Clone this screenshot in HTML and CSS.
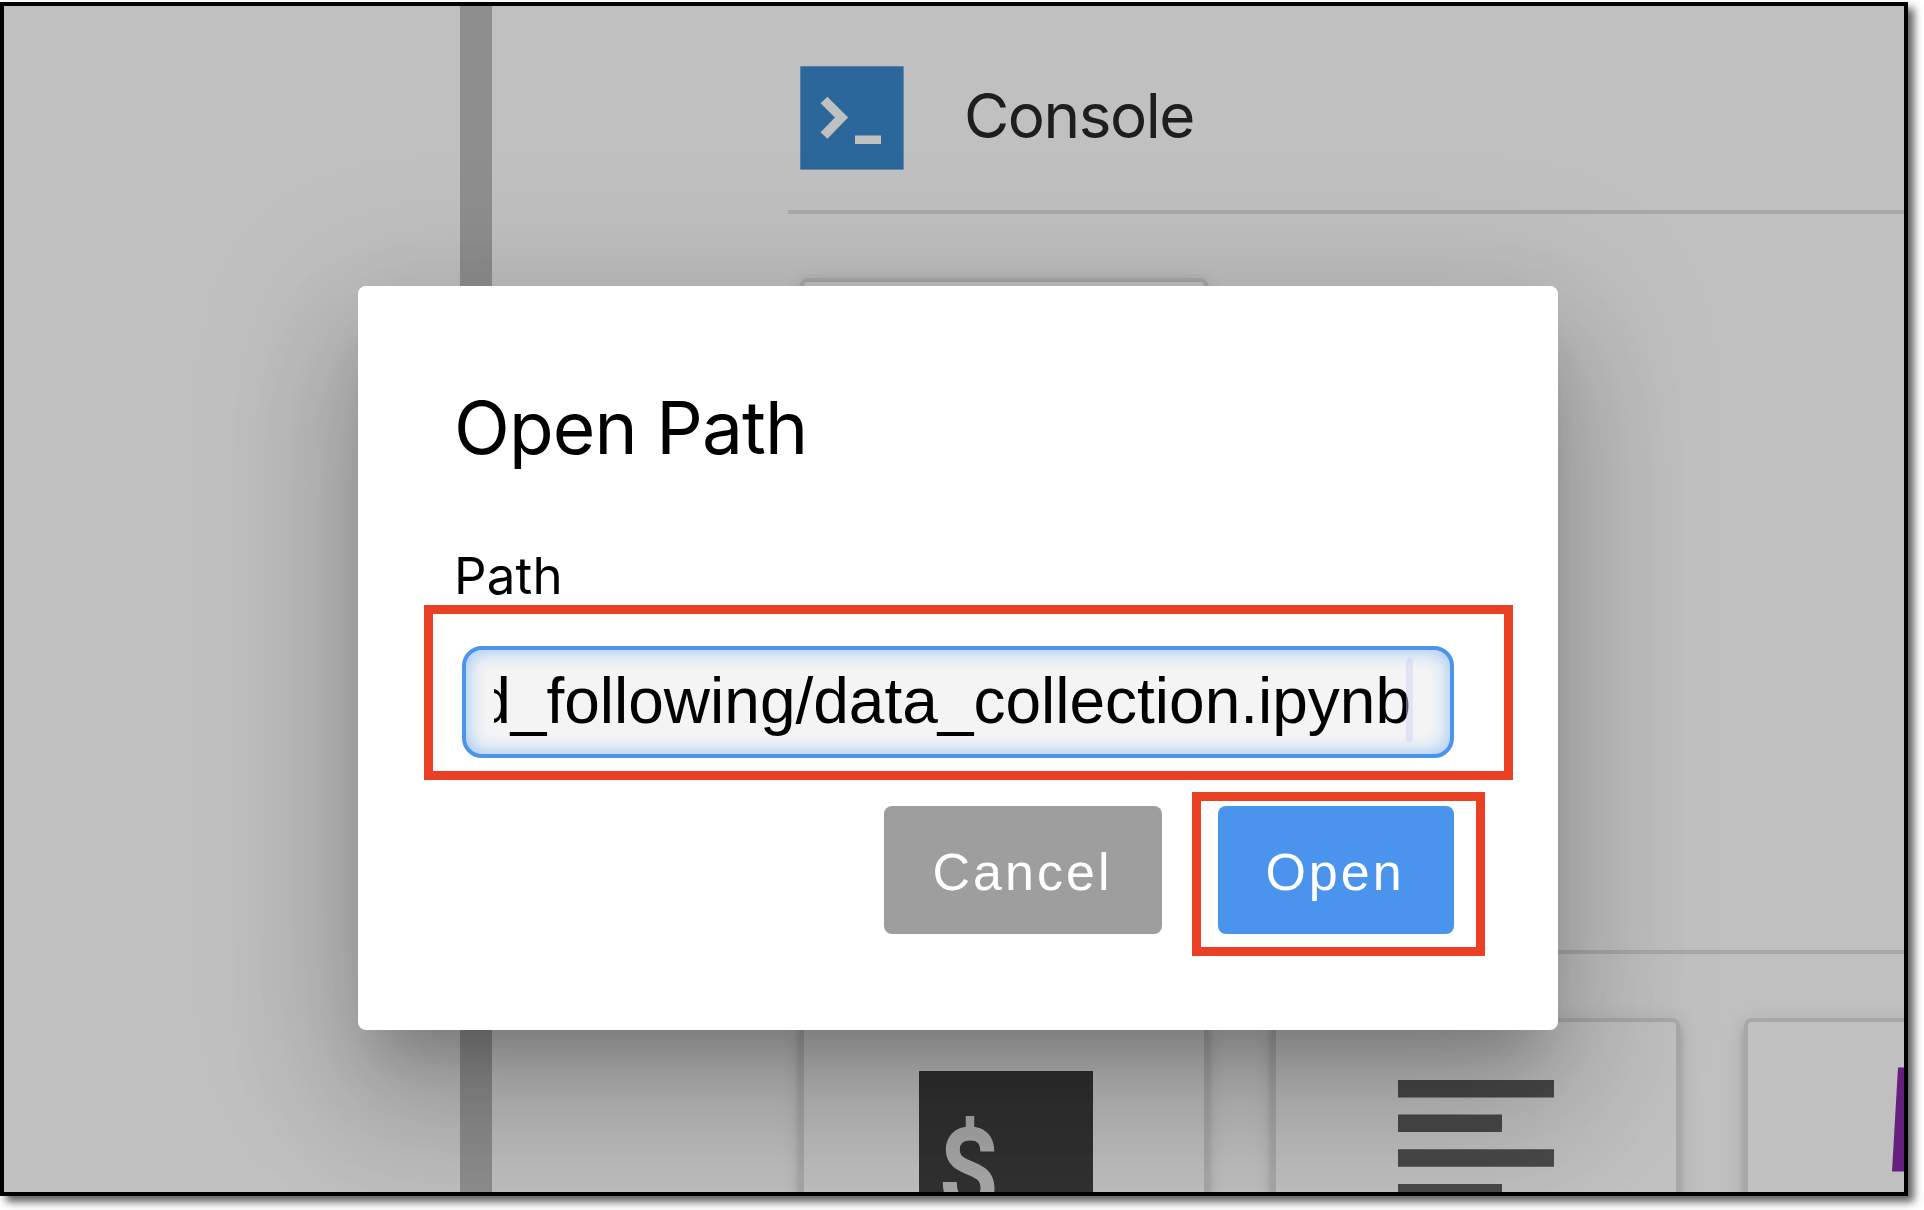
FILE: index.html
```html
<!DOCTYPE html>
<html lang="en">
<head>
<meta charset="utf-8">
<title>Open Path</title>
<link rel="stylesheet" href="styles.css">
</head>
<body>
<div class="frame">
  <div class="sidebar"></div>
  <div class="splitter"></div>
  <main class="launcher">
    <header class="section-head">
      <svg class="section-icon" viewBox="0 0 104 104">
        <rect x=".3" y=".3" width="103.3" height="103.3" fill="#3a89ce"/>
        <path d="M24 34 41.500 51.500 24 69.500" fill="none" stroke="#fff" stroke-width="9.500"/>
        <rect x="55" y="69.500" width="26" height="8.500" fill="#fff"/>
      </svg>
      <h2 class="section-title">Console</h2>
    </header>
    <div class="cards"><div class="card"></div></div>
    <div class="rule"></div>
    <div class="cards other">
      <div class="card">
        <svg class="card-icon" width="174" height="174" viewBox="0 0 174 174">
          <rect width="174" height="174" fill="#424242"/>
          <g fill="none" stroke="#e0e0e0">
            <path d="M51 45v15" stroke-width="8.500"/>
            <path d="M68.300 80.500C68.300 69 62.500 62.500 51 62.500C40 62.500 33.800 69 33.800 78.500C33.800 102 68.500 92 68.500 117C68.500 127 62 133.500 50.500 133.500C38 133.500 30.800 127 30.800 111" stroke-width="14"/>
          </g>
        </svg>
      </div>
      <div class="card">
        <svg class="card-icon lines" width="156" height="156" viewBox="0 0 156 156">
          <path d="M0 0h156v17.500H0zM0 34.600h104v17.500H0zM0 69.300h156v17.500H0zM0 104h104v17.500H0zM0 138.500h156v17.500H0z" fill="#616161"/>
        </svg>
      </div>
      <div class="card">
        <svg class="card-icon markdown" width="112" height="120" viewBox="0 0 112 120">
          <path d="M6 .5H106L112 104.500H0z" fill="#862aa6"/>
        </svg>
      </div>
    </div>
  </main>
  <div class="backdrop">
    <section class="dialog">
      <h1 class="title">Open Path</h1>
      <div class="label">Path</div>
      <div class="field marked">
        <div class="input"><div class="value"><span>d_following/data_collection.ipynb</span></div><i class="caret"></i></div>
      </div>
      <div class="actions">
        <button class="btn cancel">Cancel</button>
        <div class="marked"><button class="btn open">Open</button></div>
      </div>
    </section>
  </div>
</div>
</body>
</html>
```
FILE: styles.css
```css
* { box-sizing: border-box; }
html, body { width: 1924px; height: 1210px; overflow: hidden; }
body { margin: 0; padding-top: 2px; background: #fff; font-family: Inter, sans-serif; }
h1, h2 { margin: 0; font-weight: 400; }

.frame {
  position: relative;
  display: flex;
  width: 1908px;
  height: 1194px;
  overflow: visible;
  border: 4px solid #000;
  box-shadow: 6px 6px 8px rgba(0, 0, 0, .62);
}
.sidebar { width: 456px; }
.splitter { width: 32px; background: #bdbdbd; }
.launcher { flex: 1; min-width: 0; overflow: hidden; padding-left: 296px; }

.section-head {
  display: flex;
  gap: 60px;
  height: 208px;
  padding: 60px 0 0 12px;
  border-bottom: 4px solid #e0e0e0;
}
.section-icon { width: 104px; height: 104px; flex: none; }
.section-title { color: #282828; font-size: 62px; line-height: 100px; letter-spacing: -1.450px; }

.cards { display: flex; gap: 64px; height: 736px; padding: 64px 0 0 12px; }
.card {
  flex: none;
  width: 408px;
  height: 480px;
  border: 4px solid #e0e0e0;
  border-radius: 8px;
  background: #fff;
  box-shadow: 0 12px 4px -8px rgba(0, 0, 0, .2), 0 8px 8px rgba(0, 0, 0, .14), 0 4px 20px rgba(0, 0, 0, .12);
}
.rule { height: 4px; background: #e0e0e0; }
.card-icon { display: block; margin: 49px 0 0 115px; }
.card-icon.lines { margin: 58px 0 0 122px; }
.card-icon.markdown { margin: 45px 0 0 144px; }

.backdrop {
  position: absolute;
  inset: 0;
  overflow: hidden;
  padding: 280px 0 0 354px;
  background: rgba(0, 0, 0, .247);
}
.dialog {
  width: 1200px;
  height: 744px;
  padding: 96px 44px 0 66px;
  border-radius: 8px;
  background: #fff;
  color: #000;
  box-shadow: 0 40px 52px -24px rgba(0, 0, 0, .2), 0 80px 124px 12px rgba(0, 0, 0, .14), 0 32px 152px 28px rgba(0, 0, 0, .12);
}
.title { padding-left: 30px; height: 152px; font-size: 73px; line-height: 91px; letter-spacing: -.900px; }
.label { padding: 15px 0 0 30px; height: 71px; font-size: 51px; line-height: 54px; letter-spacing: .2px; }
.marked { border: 9px solid #ea4125; }
.field { height: 175px; width: 1089px; padding: 32px 50px 0 29px; }
.input {
  position: relative;
  height: 112px;
  padding: 0 39px 0 28px;
  border: 4px solid #4a94ee;
  border-radius: 20px;
  background: #f4f4f4;
  box-shadow: inset 0 0 20px #90c0f4;
}
.value {
  display: flex;
  justify-content: flex-end;
  overflow: hidden;
  font: 64px/103px "Liberation Sans", sans-serif;
  white-space: nowrap;
}
.caret { position: absolute; left: 940px; top: 8px; width: 7px; height: 84px; border-radius: 3px; background: rgba(200, 210, 245, .45); }
.actions { display: flex; justify-content: flex-end; gap: 30px; margin: 12px 29px 0 0; }
.btn {
  display: block;
  height: 128px;
  padding: 4px 0 0;
  border: 0;
  border-radius: 8px;
  color: #fff;
  font: 52px/124px "Liberation Sans", sans-serif;
  letter-spacing: 3px;
}
.cancel { width: 278px; margin-top: 14px; padding-right: 1px; background: #9e9e9e; }
.open { width: 236px; padding-right: 2px; background: #4a94ee; }
.actions .marked { width: 293px; height: 164px; padding: 5px 0 0 17px; }
```
